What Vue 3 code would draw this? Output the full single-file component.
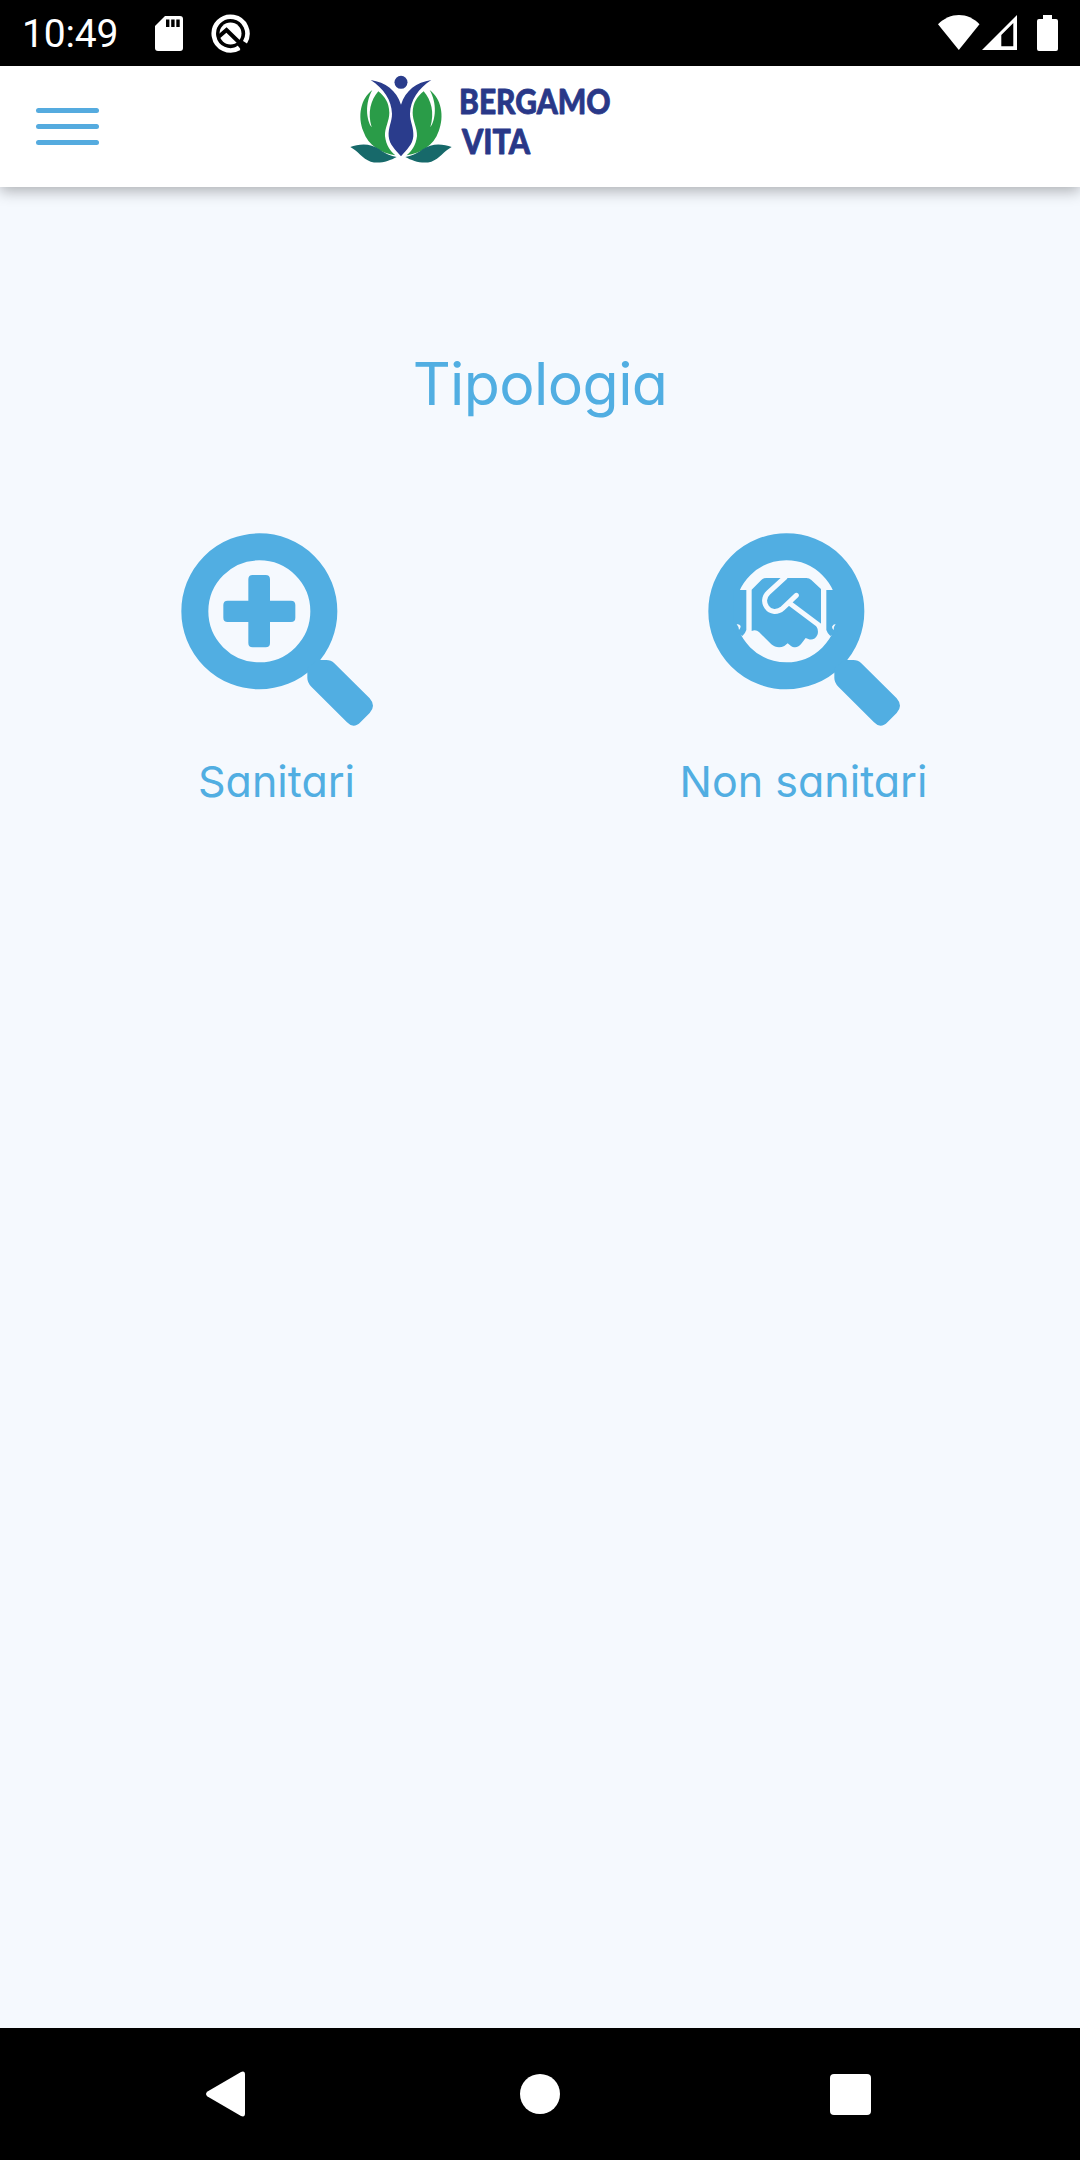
<script setup>
import { ref } from 'vue'

const time = ref('10:49')
const title = ref('Tipologia')

const categories = [
  { key: 'sanitari', label: 'Sanitari' },
  { key: 'non-sanitari', label: 'Non sanitari' }
]
</script>

<template>
  <div class="screen">
    <div class="status-bar">
      <span class="time">{{ time }}</span>
      <svg class="sd-card" width="28" height="35" viewBox="0 0 28 35">
        <path fill="#fff" d="M10 0H25Q28 0 28 3V32Q28 35 25 35H3Q0 35 0 32V10Z" />
        <path d="M11 3.5h3.4v7.5H11zM16.2 3.5h3.4v7.5h-3.4zM21.3 3.5h3.4v7.5h-3.4z" />
      </svg>
      <svg class="q-icon" width="39" height="39" viewBox="0 0 39 39">
        <path fill="none" stroke="#fff" stroke-width="4.6" d="M28.2 34A16.8 16.8 0 1 1 34 28.2" />
        <circle cx="19.5" cy="19.5" r="11" fill="#fff" />
        <path fill="none" stroke="#000" stroke-width="4" d="M8 22.500L15.500 16L34 34" />
        <path fill="#fff" d="M24.500 36.500L29.300 34.600L26 31.500Z" />
      </svg>
      <div class="system-icons">
        <svg width="42" height="35" viewBox="0 0 42 35">
          <path fill="#fff" d="M0 9.300C12-3.100 30-3.100 41.500 9.300L20.800 35Z" />
        </svg>
        <svg class="signal" width="35" height="35" viewBox="0 0 35 35">
          <path fill="#fff" fill-rule="evenodd" d="M0 35L35 0V35ZM19.300 20V31.300H31.300V8Z" />
        </svg>
        <svg class="battery" width="21" height="36" viewBox="0 0 21 36">
          <path fill="#fff" d="M6 0h9v4h4q2 0 2 2v28q0 2-2 2H2q-2 0-2-2V6q0-2 2-2h4z" />
        </svg>
      </div>
    </div>

    <header class="header">
      <button class="menu" type="button" aria-label="Menu">
        <span></span>
        <span></span>
        <span></span>
      </button>
      <svg class="logo" width="280" height="104" viewBox="0 0 280 104">
        <defs>
          <g id="leaf">
            <path fill="#2a9c48" d="M97 72C62 98 52 150 70 196C85 240 125 262 166 268C152 256 138 238 135 210C134 185 148 165 148 140C147 110 135 92 115 76C92 103 82 140 95 184C79 162 74 112 97 72Z" />
            <path fill="#17696a" d="M31 243C56 233 92 230 118 250C137 264 152 270 170 273C148 285 118 295 92 287C67 278 54 255 31 243Z" />
          </g>
        </defs>
        <g transform="scale(.33333)">
          <use href="#leaf" />
          <use href="#leaf" transform="translate(366 0) scale(-1 1)" />
          <circle cx="183" cy="49" r="19.500" fill="#2a3c8c" />
          <path fill="#2a3c8c" d="M92 42C137 49 169 73 183 116C197 73 229 49 274 42C235 67 211 103 210 143C210 168 222 184 220 211C218 237 199 252 183 271C167 252 148 237 146 211C144 184 156 168 156 143C155 103 131 67 92 42Z" />
        </g>
        <g class="logo-text">
          <text x="119" y="48.300" textLength="151.500" lengthAdjust="spacingAndGlyphs">BERGAMO</text>
          <text x="122" y="88.300" textLength="68" lengthAdjust="spacingAndGlyphs">VITA</text>
        </g>
      </svg>
    </header>

    <main class="content">
      <h1 class="title">{{ title }}</h1>
      <div class="categories">
        <a v-for="item in categories" :key="item.key" class="category" :class="item.key">
          <svg width="192" height="194" viewBox="32 39 576 582">
            <circle cx="267" cy="274" r="193.500" fill="none" stroke="#51aee2" stroke-width="81" />
            <path fill="#51aee2" d="M440 420H468Q482 420 492 430L598 535Q618 558 598 579L571 606Q550 628 530 607L423 500Q411 488 411 474V445Z" />
            <path v-if="item.key === 'sanitari'" fill="#51aee2" d="M247 165H286Q299 165 299 178V242H362Q375 242 375 255V293Q375 306 362 306H299V369Q299 382 286 382H247Q234 382 234 369V306H172Q159 306 159 293V255Q159 242 172 242H234V178Q234 165 247 165Z" />
            <!-- handshake -->
            <g v-else transform="translate(-81 0)">
              <path fill="#51aee2" d="M190 210H228V330Q225 340 216 348L190 330ZM506 210H468V330Q471 340 480 348L506 330Z" />
              <path fill="#51aee2" d="M244 209L273 180Q279 174 288 174H408Q417 174 423 180L452 207V314L438 319Q446 332 441 345C434 361 419 361 406 354L394 370C384 384 371 384 361 377L352 370L342 378C328 385 314 382 303 373L266 336Q257 328 244 333Z" />
              <path fill="none" stroke="#f5f9fe" stroke-width="15" stroke-linecap="round" d="M344 172L294 218C280 231 280 249 289 261C300 278 322 278 337 265L378 226M358 250L449 318" />
              <path fill="#f5f9fe" d="M199 313Q207 311 211 318Q211 325 206 330Q205 319 199 313ZM496 312Q488 312 485 320Q485 326 490 330Q490 319 496 312Z" />
            </g>
          </svg>
          <span class="label">{{ item.label }}</span>
        </a>
      </div>
    </main>

    <nav class="nav-bar">
      <svg width="40" height="46" viewBox="0 0 40 46">
        <path fill="#fff" d="M1.500 20.500L35 1Q39 -.5 39 3.500V42.500Q39 46.500 35 45L1.500 25.500Q-1.500 23 1.500 20.500Z" />
      </svg>
      <span class="home"></span>
      <span class="recents"></span>
    </nav>
  </div>
</template>

<style>
body {
  margin: 0;
}
</style>

<style scoped>
.screen {
  width: 1080px;
  height: 2160px;
  display: flex;
  flex-direction: column;
  background-color: #f5f9fe;
  overflow: hidden;
}

.status-bar {
  height: 66px;
  flex-shrink: 0;
  box-sizing: border-box;
  display: flex;
  align-items: center;
  padding: 0 22px;
  background-color: #000;
}

.time {
  width: 133px;
  color: #fff;
  font: 39px/66px Roboto, sans-serif;
  letter-spacing: -.2px;
  padding-top: 2px;
}

.q-icon {
  margin-left: 28px;
}

.system-icons {
  margin-left: auto;
  display: flex;
}

.signal {
  margin-left: 2px;
}

.battery {
  margin-left: 20px;
}

.header {
  height: 121px;
  flex-shrink: 0;
  display: flex;
  align-items: flex-start;
  background-color: #fff;
  box-shadow: 0 4px 14px rgba(0, 0, 0, .3);
}

.menu {
  width: 63px;
  margin: 42px 0 0 36px;
  padding: 0;
  border: 0;
  background: none;
  display: flex;
  flex-direction: column;
  gap: 11px;
}

.menu span {
  height: 5px;
  border-radius: 3px;
  background-color: #55abdf;
}

.logo {
  margin-left: 241px;
  overflow: visible;
}

.logo-text {
  font: 900 34px Lato, sans-serif;
  fill: #293888;
  stroke: #293888;
  stroke-width: .8px;
  stroke-linejoin: round;
}

.content {
  flex: 1;
}

.title {
  margin: 157px 0 0;
  color: #51aee2;
  font: 400 59px/80px Inter, sans-serif;
  font-feature-settings: 'cv11';
  letter-spacing: -.6px;
  text-align: center;
}

.categories {
  display: flex;
  padding: 109px 13px 0;
}

.category {
  flex: 1;
  display: flex;
  flex-direction: column;
  align-items: center;
}

.label {
  margin-top: 24px;
  color: #51aee2;
  font: 400 43px/60px Inter, sans-serif;
  font-feature-settings: 'cv11';
}

.nav-bar {
  height: 132px;
  flex-shrink: 0;
  box-sizing: border-box;
  display: flex;
  align-items: center;
  justify-content: space-between;
  padding: 0 209px 0 206px;
  background-color: #000;
}

.home {
  width: 40px;
  height: 40px;
  margin-left: 4px;
  border-radius: 50%;
  background-color: #fff;
}

.recents {
  width: 41px;
  height: 41px;
  border-radius: 4px;
  background-color: #fff;
}
</style>
